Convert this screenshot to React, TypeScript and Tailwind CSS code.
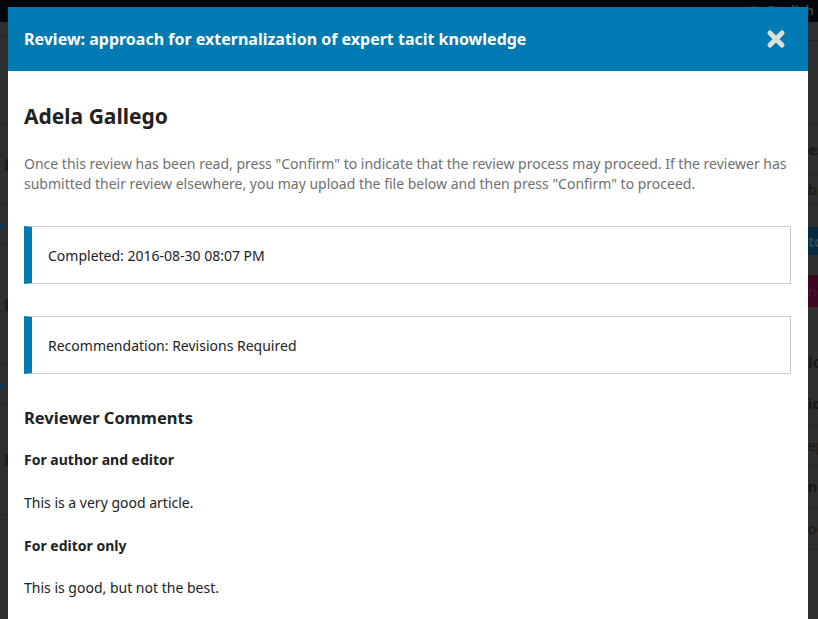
import { X } from 'lucide-react'

// Dimmed page behind the modal (only the edges show)
function BackdropPage() {
    return (
        <div className="h-[619px] w-[818px] overflow-hidden bg-[#2f2f2f] font-['Noto_Sans',sans-serif]">
            {/* Top bar */}
            <div className="flex h-[22px] items-center justify-end bg-[#03070c] pr-1 text-[13px] font-bold text-[#3a3f45]">
                <span className="mr-2">◎</span>English
            </div>
            <div className="flex">
                {/* Left strip */}
                <div className="flex w-[8px] flex-col">
                    <div className="h-[14px] border-b border-[#262626]" />
                    <div className="h-[89px] border-b border-[#262626]" />
                    <div className="flex h-[80px] items-center border-b border-[#262626]">
                        <div className="ml-[5px] h-[12px] w-[3px] bg-[#2a1a10]" />
                    </div>
                    <div className="flex h-[40px] items-center border-b border-[#262626] text-[8px] text-[#0b3b5a]">▶</div>
                    <div className="flex h-[120px] items-center border-b border-[#262626]">
                        <div className="ml-[5px] h-[12px] w-[3px] bg-[#2a1a10]" />
                    </div>
                    <div className="flex h-[40px] items-center border-b border-[#262626] text-[8px] text-[#0b3b5a]">▶</div>
                    <div className="flex h-[110px] items-center border-b border-[#262626]">
                        <div className="ml-[5px] h-[12px] w-[3px] bg-[#2a1a10]" />
                    </div>
                </div>
                <div className="flex-1" />
                {/* Right strip */}
                <div className="flex w-[10px] flex-col overflow-hidden whitespace-nowrap text-[14px] text-[#161616]">
                    <div className="h-[19px] border-b border-[#262626]" />
                    <div className="h-[84px] border-b border-[#262626]" />
                    <div className="flex h-[50px] items-center border-b border-[#262626] font-bold">es</div>
                    <div className="flex h-[30px] items-center border-b border-[#262626]">br</div>
                    <div className="h-[22px]" />
                    <div className="flex h-[28px] items-center bg-[#032a3e] font-bold text-[#2f4a59]">to</div>
                    <div className="h-[20px]" />
                    <div className="flex h-[32px] items-center bg-[#3d0620] text-[#4a1a2f]">ne</div>
                    <div className="h-[35px]" />
                    <div className="flex h-[40px] items-center text-[16px] font-bold">io</div>
                    <div className="flex h-[44px] items-center border-b border-[#262626] font-bold">io</div>
                    <div className="flex h-[40px] items-center border-b border-[#262626]">ep</div>
                    <div className="flex h-[42px] items-center border-b border-[#262626] font-bold">no</div>
                    <div className="flex h-[42px] items-center border-b border-[#262626]">oo</div>
                </div>
            </div>
        </div>
    )
}

// Boxed notice with a blue stripe on the left
function InfoBox({ children }: { children: React.ReactNode }) {
    return (
        <div className="flex h-[58px] items-center border border-l-[8px] border-[#cccccc] border-l-[#007ab2] pl-[16px] text-[14px] text-[#222222]">
            {children}
        </div>
    )
}

export default function App() {
    return (
        <div className="relative h-[619px] w-[818px] overflow-hidden font-['Noto_Sans',sans-serif]">
            <BackdropPage />

            {/* Modal */}
            <div className="absolute left-[8px] top-[7px] w-[800px] bg-white">
                {/* Header */}
                <div className="flex h-[64px] items-center justify-between bg-[#007ab2] px-[16px]">
                    <h2 className="text-[16px] font-bold text-white">
                        Review: approach for externalization of expert tacit knowledge
                    </h2>
                    <button className="mr-[4px] flex h-[24px] w-[24px] items-center justify-center text-[#dddddd]">
                        <X size={26} strokeWidth={5} />
                    </button>
                </div>

                {/* Body */}
                <div className="px-[16px] pb-[40px] pt-[31px]">
                    <h3 className="text-[21px] font-bold leading-[28px] text-[#222222]">Adela Gallego</h3>
                    <p className="mt-[24px] text-[14px] leading-[20px] text-[#707070]">
                        Once this review has been read, press "Confirm" to indicate that the review process may proceed. If the reviewer has
                        submitted their review elsewhere, you may upload the file below and then press "Confirm" to proceed.
                    </p>

                    <div className="mt-[32px] flex flex-col gap-[32px] pr-[1px]">
                        <InfoBox>Completed: 2016-08-30 08:07 PM</InfoBox>
                        <InfoBox>Recommendation: Revisions Required</InfoBox>
                    </div>

                    <h4 className="mt-[32px] text-[16.5px] font-bold leading-[24px] text-[#222222]">Reviewer Comments</h4>
                    <p className="mt-[20px] text-[14px] font-bold leading-[20px] text-[#222222]">For author and editor</p>
                    <p className="mt-[23px] text-[14px] leading-[20px] text-[#222222]">This is a very good article.</p>
                    <p className="mt-[23px] text-[14px] font-bold leading-[20px] text-[#222222]">For editor only</p>
                    <p className="mt-[22px] text-[14px] leading-[20px] text-[#222222]">This is good, but not the best.</p>
                </div>
            </div>
        </div>
    )
}
